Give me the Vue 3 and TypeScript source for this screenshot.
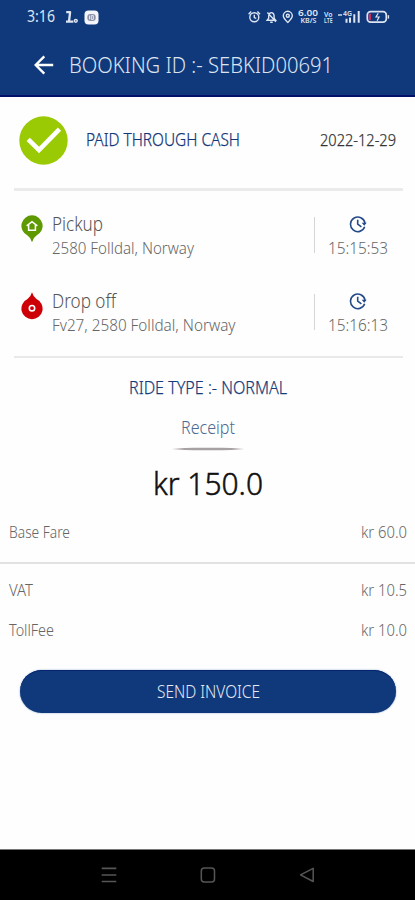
<script setup lang="ts">
import { h, type FunctionalComponent } from 'vue'

interface FitProps { text: string; width: number; size: number }

/* Single line of text fitted to a fixed advance width, capitals centred in its box. */
const FitText: FunctionalComponent<FitProps> = (p) =>
  h('svg', { width: p.width, height: p.size, class: 'fit' }, [
    h('text', {
      x: 0, y: p.size * 0.857, 'font-size': p.size, fill: 'currentColor',
      textLength: p.width, lengthAdjust: 'spacingAndGlyphs',
    }, p.text),
  ])
FitText.props = ['text', 'width', 'size']

const stops = [
  { kind: 'pickup', label: 'Pickup', labelWidth: 51, address: '2580 Folldal, Norway', addressWidth: 142, time: '15:15:53' },
  { kind: 'drop', label: 'Drop off', labelWidth: 64, address: 'Fv27, 2580 Folldal, Norway', addressWidth: 183.5, time: '15:16:13' },
]
const fares = [
  { label: 'Base Fare', width: 61, amount: 'kr 60.0' },
  { label: 'VAT', width: 24, amount: 'kr 10.5' },
  { label: 'TollFee', width: 45, amount: 'kr 10.0' },
]
</script>

<template>
  <div class="screen">
    <header class="top">
      <div class="status">
        <div class="status-left">
          <FitText text="3:16" :width="28" :size="15.5" />
          <svg class="app-l" width="14" height="14" viewBox="0 0 14 14" fill="none" stroke="currentColor">
            <path d="M1.2 2.2h3.9L4 11.4M1 11.6h7.4" stroke-width="2.3" stroke-linejoin="round" />
            <circle cx="10.8" cy="10.8" r="1.4" stroke-width="1.5" />
          </svg>
          <svg class="app-box" width="15" height="15" viewBox="0 0 15 15">
            <rect x=".5" y=".5" width="14" height="14" rx="4" fill="#f4f5fb" />
            <rect x="3.3" y="4" width="8.4" height="7" rx="3" fill="#8b92a6" />
            <path d="M5.5 5.6v3.8M7.3 5.6h2v3.8h-2z" stroke="#e4e7ef" fill="none" />
          </svg>
        </div>
        <svg class="status-right" width="144" height="22" viewBox="246 6 144 22" fill="none" stroke="currentColor" stroke-width="1.4">
          <circle cx="254.3" cy="17.3" r="4.5" />
          <path d="M248.6 14.2l2.6-2.7M260 14.2l-2.6-2.7M254.3 14.8v2.8l2 .8" />
          <path d="M267.2 20.2l1.5-2v-2.4q.3-3.2 2.7-3.2t2.7 3.2v2.4l1.5 2zM270.2 22.3h2.5M267.4 12.5l8.5 9.2" />
          <path d="M287.8 22.4q-4.5-4.2-4.5-6.6a4.5 4.5 0 0 1 9 0q0 2.4-4.5 6.6z" />
          <circle cx="287.8" cy="15.7" r="1.5" />
          <g class="tiny" fill="currentColor" stroke="none">
            <text x="298" y="16.2" font-size="8.6" textLength="20" lengthAdjust="spacingAndGlyphs">6.00</text>
            <text x="300.5" y="23" font-size="6.8" textLength="16" lengthAdjust="spacingAndGlyphs">KB/S</text>
            <text x="324" y="16.5" font-size="7.2" textLength="8.5" lengthAdjust="spacingAndGlyphs">Vo</text>
            <text x="324" y="23" font-size="7.2" textLength="8.5" lengthAdjust="spacingAndGlyphs">LTE</text>
            <text x="343" y="16.4" font-size="7.2" textLength="9" lengthAdjust="spacingAndGlyphs">4G</text>
          </g>
          <path d="M338 15h4" />
          <path d="M346.5 18.7v4M350 17.5v5.2M354.3 14.2v8.5M358.7 11v11.7" stroke-width="2" />
          <rect x="367.3" y="11.7" width="19" height="10.5" rx="3.3" stroke-width="1.7" />
          <path d="M388.4 15.2v3.4" />
          <path d="M369.8 13.7v6.5" stroke="#d52d5d" stroke-width="2.2" />
          <path d="M378.2 13.2l-2.2 3.8h3.1l-2 3.8" stroke-width="1.2" />
        </svg>
      </div>
      <div class="title">
        <svg width="20" height="20" viewBox="0 0 20 20" fill="none" stroke="#fff" stroke-width="2.4">
          <path d="M19.2 10H2M10.3 1.3L1.7 10l8.6 8.7" />
        </svg>
        <FitText text="BOOKING ID :- SEBKID00691" :width="264" :size="22.4" />
      </div>
    </header>

    <main>
      <section class="paid">
        <svg width="49" height="49" viewBox="0 0 49 49">
          <circle cx="24.5" cy="24.5" r="24.2" fill="#9aca04" />
          <path d="M9.2 23.4L20 34 40.5 13.2" fill="none" stroke="#fff" stroke-width="4.6" />
        </svg>
        <FitText class="paid-label" text="PAID THROUGH CASH" :width="154" :size="18" />
        <FitText class="date" text="2022-12-29" :width="76" :size="15.8" />
      </section>

      <section class="stops">
        <div v-for="s in stops" :key="s.kind" class="stop">
          <svg v-if="s.kind === 'pickup'" class="pin" width="22" height="28" viewBox="0 0 22 28">
            <path d="M11 .3a10.6 10.6 0 0 1 4.5 20.2Q12.3 22.5 11 27.2 9.7 22.5 6.5 20.5A10.6 10.6 0 0 1 11 .3z" fill="#5f9900" />
            <path d="M5.7 10.8L11 6.6l5.3 4.2M7.6 10v5.3h6.8V10" fill="none" stroke="#fff" stroke-width="1.5" />
          </svg>
          <svg v-else class="pin" width="22" height="28" viewBox="0 0 22 28">
            <path d="M11 27.2a10.6 10.6 0 0 1-4.5-20.2Q9.7 5 11 .3q1.3 4.7 4.5 6.7A10.6 10.6 0 0 1 11 27.2z" fill="#cd0007" />
            <circle cx="11" cy="16.2" r="2.7" fill="none" stroke="#fff" stroke-width="1.6" />
          </svg>
          <div class="place">
            <FitText class="name" :text="s.label" :width="s.labelWidth" :size="20" />
            <FitText class="address" :text="s.address" :width="s.addressWidth" :size="17" />
          </div>
          <div class="when">
            <svg width="18" height="18" viewBox="0 0 18 18" fill="none" stroke="#244a87" stroke-width="1.6">
              <path d="M15.7 11.8A7.3 7.3 0 1 1 16 8" />
              <path d="M8.7 4.7v4.5l3.7 2.6" />
              <path d="M12.7 7.7h5l-2.5 3z" fill="#244a87" stroke="none" />
            </svg>
            <FitText :text="s.time" :width="60" :size="16.2" />
          </div>
        </div>
      </section>

      <section class="summary">
        <FitText class="ride" text="RIDE TYPE :- NORMAL" :width="158" :size="17.8" />
        <FitText class="receipt" text="Receipt" :width="54" :size="17.6" />
        <svg class="underline" width="72" height="4" viewBox="0 0 72 4">
          <path d="M0 2Q14 .8 22 .8H50Q58 .8 72 2 58 3.2 50 3.2H22Q14 3.2 0 2z" fill="#a8a1a4" />
        </svg>
        <FitText class="total" text="kr 150.0" :width="110" :size="30.5" />
      </section>

      <section class="fares">
        <div v-for="f in fares" :key="f.label" class="fare">
          <FitText :text="f.label" :width="f.width" :size="15.6" />
          <FitText :text="f.amount" :width="46" :size="15.6" />
        </div>
      </section>

      <button class="send" type="button">
        <FitText text="SEND INVOICE" :width="103" :size="18" />
      </button>
    </main>

    <nav class="nav">
      <svg width="16" height="18" viewBox="0 0 16 18" fill="none" stroke="currentColor" stroke-width="1.7"><path d="M.7 2.3h14.6M.7 9h14.6M.7 15.5h14.6" /></svg>
      <svg width="16" height="18" viewBox="0 0 16 18" fill="none" stroke="currentColor" stroke-width="1.5"><rect x="1.3" y="1.9" width="13.2" height="14" rx="3" /></svg>
      <svg width="16" height="18" viewBox="0 0 16 18" fill="none" stroke="currentColor" stroke-width="1.5" stroke-linejoin="round"><path d="M14.2 2.3v13.2L1.5 8.9z" /></svg>
    </nav>
  </div>
</template>

<style>
body { background: #fff; }
svg.fit { display: block; flex: none; overflow: visible; }
</style>

<style scoped>
.screen {
  width: 415px;
  height: 900px;
  display: flex;
  flex-direction: column;
  background: #fefefe;
  font-family: "Noto Sans", "Open Sans", sans-serif;
  font-weight: 300;
  overflow: hidden;
}
svg { display: block; flex: none; }
.top {
  box-sizing: border-box;
  height: 97px;
  flex: none;
  background: #10397b;
  border-bottom: 2px solid #04116c;
  color: #dce4f2;
}
.status { height: 34px; display: flex; justify-content: space-between; align-items: center; padding: 0 25px 0 27px; }
.status-left { display: flex; align-items: center; font-weight: 400; }
.app-l { margin-left: 10px; }
.app-box { margin-left: 5px; }
.status-right { overflow: visible; }
.tiny { font-weight: 600; }
.title { height: 62px; display: flex; align-items: center; padding-left: 34px; gap: 15px; }
main { flex: 1; display: flex; flex-direction: column; }
.paid {
  margin: 0 12px 0 14px;
  padding: 0 5px 5px;
  height: 86px;
  display: flex;
  align-items: center;
  border-bottom: 3px solid #ebebeb;
}
.paid-label, .date, .ride { stroke: currentColor; stroke-width: 0.25px; }
.paid-label { margin-left: 18px; color: #123676; }
.date { margin-left: auto; margin-right: 2px; color: #333; }
.stops {
  margin: 0 12px 0 14px;
  padding-top: 24px;
  height: 141px;
  border-bottom: 2px solid #e9e9e9;
}
.stop { height: 76.5px; display: flex; align-items: flex-start; }
.pin { margin-left: 6.5px; }
.stop .place { margin-left: 9px; flex: 1; display: flex; flex-direction: column; gap: 5.2px; color: #666; }
.place .name { margin-top: -1px; color: #555; }
.when {
  width: 87px;
  height: 36px;
  margin: 2px 1.5px 0 0;
  border-left: 1px solid #d5d5d5;
  display: flex;
  flex-direction: column;
  align-items: center;
  gap: 7px;
  color: #666;
}
.when > svg:first-child { margin: -2px 1px 0 0; }
.summary { display: flex; flex-direction: column; align-items: center; }
.ride { margin-top: 20.5px; color: #173b79; }
.receipt { margin-top: 23px; color: #4d6a90; }
.underline { margin-top: 10.5px; }
.total { margin-top: 18px; color: #111; stroke: currentColor; stroke-width: 0.5px; }
.fares { margin-top: 13px; color: #666; }
.fare { height: 40px; padding: 0 8px 0 9px; display: flex; justify-content: space-between; align-items: center; }
.fare:first-child { box-sizing: border-box; height: 51.5px; padding-bottom: 10.5px; border-bottom: 2px solid #e2e2e2; }
.fare:nth-child(2) { margin-top: 6px; }
.send {
  margin: 19.5px 19px 0 20px;
  height: 43.5px;
  padding: 0;
  border: 0;
  border-radius: 22px;
  background: #10397b;
  box-shadow: inset 0 1px 0 #05266e, 0 0 2px #8ca5c6;
  color: #e5ebf5;
  font: inherit;
  display: flex;
  align-items: center;
  justify-content: center;
}
.nav {
  box-sizing: border-box;
  height: 51px;
  flex: none;
  background: #000;
  border-top: 1px solid #777;
  color: #565656;
  display: flex;
  justify-content: space-between;
  align-items: center;
  padding: 0 100px 0 101px;
}
</style>
